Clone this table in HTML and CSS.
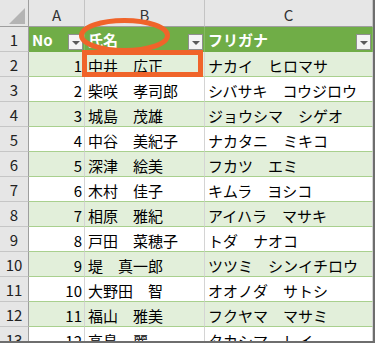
FILE: index.html
```html
<!DOCTYPE html>
<html lang="ja">
<head>
<meta charset="utf-8">
<link rel="stylesheet" href="styles.css">
</head>
<body>
<div class="sheet">
  <div class="grid">
    <div class="corner"><span class="tri"></span></div>
    <div class="colhead">A</div>
    <div class="colhead">B</div>
    <div class="colhead">C</div>

    <div class="rowhead">1</div>
    <div class="th">No<span class="filter"><span class="arrow"></span></span></div>
    <div class="th">氏名<span class="filter"><span class="arrow"></span></span></div>
    <div class="th">フリガナ<span class="filter"><span class="arrow"></span></span></div>

    <div class="rowhead">2</div>
    <div class="td num band">1</div><div class="td band">中井　広正</div><div class="td band">ナカイ　ヒロマサ</div>
    <div class="rowhead">3</div>
    <div class="td num">2</div><div class="td">柴咲　孝司郎</div><div class="td">シバサキ　コウジロウ</div>
    <div class="rowhead">4</div>
    <div class="td num band">3</div><div class="td band">城島　茂雄</div><div class="td band">ジョウシマ　シゲオ</div>
    <div class="rowhead">5</div>
    <div class="td num">4</div><div class="td">中谷　美紀子</div><div class="td">ナカタニ　ミキコ</div>
    <div class="rowhead">6</div>
    <div class="td num band">5</div><div class="td band">深津　絵美</div><div class="td band">フカツ　エミ</div>
    <div class="rowhead">7</div>
    <div class="td num">6</div><div class="td">木村　佳子</div><div class="td">キムラ　ヨシコ</div>
    <div class="rowhead">8</div>
    <div class="td num band">7</div><div class="td band">相原　雅紀</div><div class="td band">アイハラ　マサキ</div>
    <div class="rowhead">9</div>
    <div class="td num">8</div><div class="td">戸田　菜穂子</div><div class="td">トダ　ナオコ</div>
    <div class="rowhead">10</div>
    <div class="td num band">9</div><div class="td band">堤　真一郎</div><div class="td band">ツツミ　シンイチロウ</div>
    <div class="rowhead">11</div>
    <div class="td num">10</div><div class="td">大野田　智</div><div class="td">オオノダ　サトシ</div>
    <div class="rowhead">12</div>
    <div class="td num band">11</div><div class="td band">福山　雅美</div><div class="td band">フクヤマ　マサミ</div>
    <div class="rowhead">13</div>
    <div class="td num">12</div><div class="td">高島　麗</div><div class="td">タカシマ　レイ</div>
  </div>
  <svg class="annot" width="375" height="343" viewBox="0 0 375 343">
    <ellipse cx="124.5" cy="35.5" rx="43" ry="15" fill="none" stroke="#f0642a" stroke-width="5"/>
    <rect x="84.5" y="52.5" width="116" height="22" fill="none" stroke="#f0642a" stroke-width="5"/>
  </svg>
</div>
</body>
</html>
```

FILE: styles.css
```css
html, body {
  margin: 0;
  padding: 0;
  background: #ffffff;
}

.sheet {
  position: relative;
  width: 375px;
  height: 343px;
  box-sizing: border-box;
  border-right: 2px solid #6e6e6e;
  border-bottom: 2px solid #6e6e6e;
  overflow: hidden;
  font-family: "Noto Sans CJK JP", "Noto Sans", sans-serif;
  font-size: 15px;
  line-height: 1;
  color: #000;
}

.grid {
  display: grid;
  grid-template-columns: 29px 56px 120px 168px;
  grid-template-rows: 27px repeat(13, 25px);
}

.grid > div {
  box-sizing: border-box;
  display: flex;
  align-items: center;
  white-space: nowrap;
  overflow: hidden;
}

.corner {
  background: #e6e6e6;
  border-right: 1px solid #9e9e9e;
  border-bottom: 1px solid #9e9e9e;
  justify-content: flex-end;
  align-items: flex-end !important;
  padding: 0 3px 2px 0;
}

.tri {
  width: 0;
  height: 0;
  border-left: 16px solid transparent;
  border-bottom: 16px solid #b4b4b4;
}

.colhead {
  background: #e6e6e6;
  border-right: 1px solid #c4c4c4;
  border-bottom: 1px solid #9e9e9e;
  justify-content: center;
  color: #333;
  padding-top: 2px;
}

.rowhead {
  background: #e6e6e6;
  border-right: 1px solid #9e9e9e;
  border-bottom: 1px solid #c6c6c6;
  justify-content: center;
  color: #222;
}

.th {
  background: #70ad47;
  color: #ffffff;
  font-weight: bold;
  border-right: 1px solid #84b962;
  justify-content: space-between;
  padding-left: 3px;
  padding-right: 1px;
}

.filter {
  align-self: flex-end;
  margin-bottom: 2px;
  width: 15px;
  height: 16px;
  box-sizing: border-box;
  background: #f4f4f4;
  border: 1px solid #8f8f8f;
  display: flex;
  align-items: center;
  justify-content: center;
}

.arrow {
  width: 0;
  height: 0;
  margin-top: 2px;
  border-left: 4px solid transparent;
  border-right: 4px solid transparent;
  border-top: 4px solid #5a5a5a;
}

.td {
  border-right: 1px solid #d4d4d4;
  border-bottom: 1px solid #a9d08e;
  padding-left: 3px;
  padding-top: 2px;
}

.td.num {
  justify-content: flex-end;
  padding-left: 0;
  padding-right: 2px;
}

.band {
  background: #e2efda;
}

.annot {
  position: absolute;
  left: 0;
  top: 0;
  pointer-events: none;
}
```
